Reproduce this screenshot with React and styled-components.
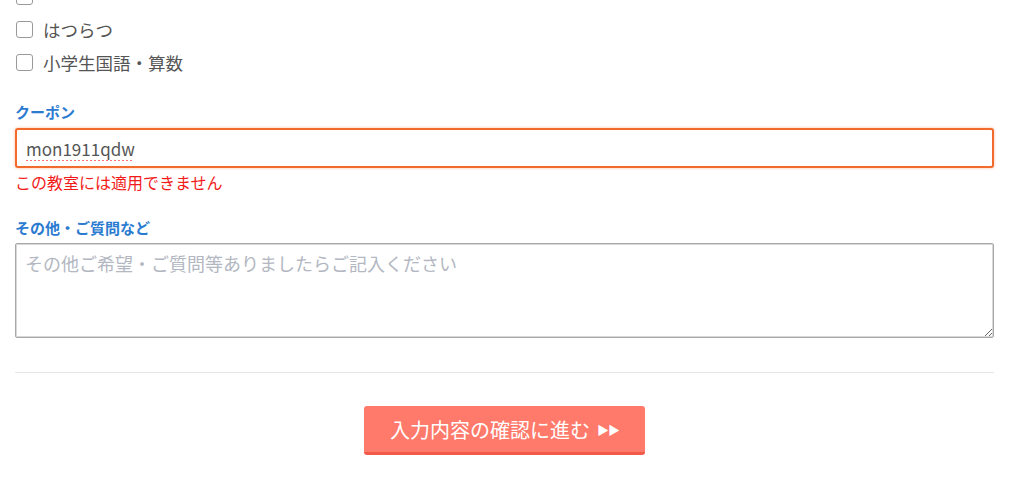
import React from "react";
import styled, { createGlobalStyle } from "styled-components";

const Global = createGlobalStyle`
  body {
    margin: 0;
    background: #fff;
    font-family: "Noto Sans CJK JP", "Noto Sans", sans-serif;
    color: #555;
    overflow: hidden;
  }
`;

const Page = styled.div`
  padding: 0 30px 0 15px;
`;

const CheckList = styled.div`
  margin-top: -20px;
  display: flex;
  flex-direction: column;
`;

const CheckRow = styled.label`
  display: flex;
  align-items: center;
  height: 33px;
  gap: 10px;
  padding-left: 1px;
  font-size: 17.5px;
  color: #555;
`;

const Box = styled.input`
  appearance: none;
  margin: 0;
  width: 17px;
  height: 17px;
  border: 1px solid #9a9a9a;
  border-radius: 3px;
  background: #fff;
  box-sizing: border-box;
`;

const Label = styled.div`
  font-size: 15px;
  line-height: 20px;
  font-weight: bold;
  color: #2b7bd0;
  margin-top: ${(p) => p.$top}px;
  margin-bottom: ${(p) => p.$bottom}px;
`;

const TextInput = styled.input`
  display: block;
  width: 100%;
  box-sizing: border-box;
  height: 40px;
  border: 2px solid #f26a2c;
  border-radius: 3px;
  box-shadow: 0 0 3px rgba(242, 106, 44, 0.45);
  padding: 0 9px;
  font-family: inherit;
  font-size: 17px;
  color: #555;
  outline: none;
  text-decoration: underline dotted #ff5a5a;
  text-underline-offset: 5px;
`;

const ErrorText = styled.div`
  margin-top: 4px;
  font-size: 16px;
  line-height: 20px;
  color: #f21b1b;
`;

const TextArea = styled.textarea`
  display: block;
  width: 100%;
  box-sizing: border-box;
  height: 95px;
  border: 1px solid #a8a8a8;
  box-shadow: inset 0 0 0 1px #d8d8d8;
  border-radius: 2px;
  padding: 6px 9px;
  font-family: inherit;
  font-size: 18px;
  color: #555;
  &::placeholder {
    color: #b3b7c2;
  }
`;

const Rule = styled.hr`
  margin: 34px 0 0;
  border: 0;
  border-top: 1px solid #e6e6e6;
`;

const Actions = styled.div`
  display: flex;
  justify-content: center;
  padding-top: 33px;
`;

const SubmitButton = styled.button`
  width: 281px;
  height: 49px;
  background: #ff7a6b;
  border: 0;
  border-bottom: 3px solid #f25b4a;
  border-radius: 3px;
  color: #fff;
  font-family: inherit;
  font-size: 20px;
  padding: 0;
  display: flex;
  align-items: center;
  justify-content: center;
  gap: 7px;
`;

const Arrows = styled.span`
  font-size: 12px;
  letter-spacing: -1px;
`;

function App() {
  const courses = ["そろばん", "はつらつ", "小学生国語・算数"];
  return (
    <Page>
      <Global />
      <CheckList>
        {courses.map((c) => (
          <CheckRow key={c}>
            <Box type="checkbox" />
            {c === "そろばん" ? "" : c}
          </CheckRow>
        ))}
      </CheckList>
      <Label $top={23} $bottom={6}>クーポン</Label>
      <TextInput defaultValue="mon1911qdw" spellCheck={false} />
      <ErrorText>この教室には適用できません</ErrorText>
      <Label $top={26} $bottom={5}>その他・ご質問など</Label>
      <TextArea placeholder="その他ご希望・ご質問等ありましたらご記入ください" />
      <Rule />
      <Actions>
        <SubmitButton>
          入力内容の確認に進む <Arrows>▶▶</Arrows>
        </SubmitButton>
      </Actions>
    </Page>
  );
}

export default App;
